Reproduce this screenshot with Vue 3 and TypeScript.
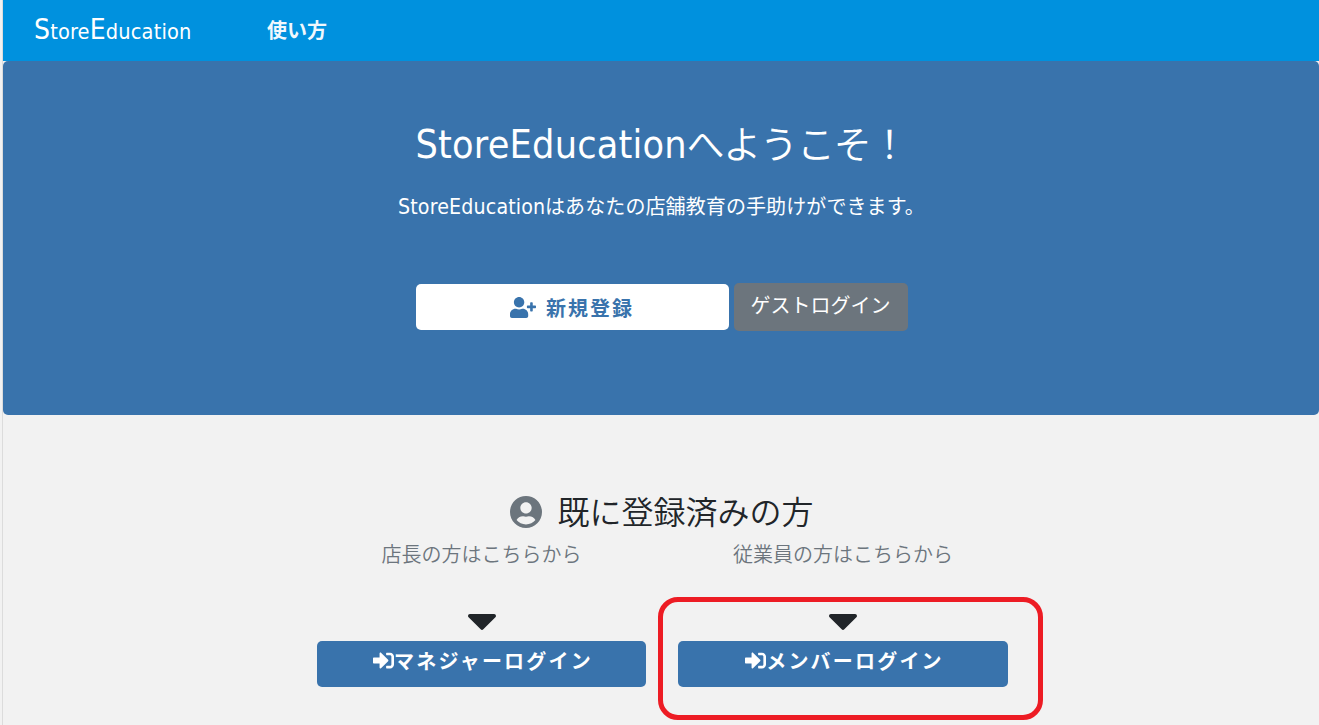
<script setup lang="ts">
interface LoginColumn {
  id: string
  guide: string
  label: string
  highlighted: boolean
}

const brand: string[] = ['S', 'tore', 'E', 'ducation']
const columns: LoginColumn[] = [
  { id: 'manager', guide: '店長の方はこちらから', label: 'マネジャーログイン', highlighted: false },
  { id: 'member', guide: '従業員の方はこちらから', label: 'メンバーログイン', highlighted: true },
]
</script>

<template>
  <div class="page">
    <header class="navbar">
      <a class="brand"><span v-for="(part, i) in brand" :key="i" :class="{ cap: i % 2 === 0 }">{{ part }}</span></a>
      <a class="nav-link">使い方</a>
    </header>

    <section class="hero">
      <h1 class="hero-title"><span class="latin">StoreEducation</span><span class="kana">へようこそ！</span></h1>
      <p class="hero-lead"><span class="latin">StoreEducation</span><span class="kana">はあなたの店舗教育の手助けができます。</span></p>
      <div class="hero-actions">
        <button class="btn btn-signup">
          <svg class="icon-plus" viewBox="0 0 640 512"><path fill="currentColor" d="M624 208h-64v-64c0-8.8-7.2-16-16-16h-32c-8.8 0-16 7.2-16 16v64h-64c-8.8 0-16 7.2-16 16v32c0 8.8 7.2 16 16 16h64v64c0 8.8 7.2 16 16 16h32c8.8 0 16-7.2 16-16v-64h64c8.8 0 16-7.2 16-16v-32c0-8.8-7.2-16-16-16zm-400 48c70.7 0 128-57.3 128-128S294.7 0 224 0 96 57.3 96 128s57.3 128 128 128zm89.6 32h-16.7c-22.2 10.2-46.9 16-72.9 16s-50.6-5.8-72.9-16h-16.7C60.2 288 0 348.2 0 422.4V464c0 26.500 21.500 48 48 48h352c26.500 0 48-21.500 48-48v-41.600c0-74.200-60.200-134.400-134.400-134.400z" /></svg>
          <span>新規登録</span>
        </button>
        <button class="btn btn-guest">ゲストログイン</button>
      </div>
    </section>

    <main class="login">
      <h2 class="login-title">
        <svg class="icon-user" viewBox="0 8 496 496"><path fill="currentColor" d="M248 8C111 8 0 119 0 256s111 248 248 248 248-111 248-248S385 8 248 8zm0 96c48.600 0 88 39.400 88 88s-39.400 88-88 88-88-39.400-88-88 39.400-88 88-88zm0 344c-58.700 0-111.300-26.600-146.500-68.200 18.800-35.400 55.600-59.800 98.500-59.800 2.400 0 4.800.4 7.100 1.100 13 4.200 26.600 6.900 40.900 6.900 14.300 0 28-2.700 40.900-6.900 2.300-.7 4.700-1.100 7.100-1.100 42.900 0 79.700 24.400 98.500 59.800C359.300 421.400 306.700 448 248 448z" /></svg>
        <span>既に登録済みの方</span>
      </h2>
      <div class="columns">
        <div v-for="col in columns" :key="col.id" class="column" :class="col.id">
          <p class="guide">{{ col.guide }}</p>
          <svg class="icon-caret" viewBox="11 192 298 169"><path fill="currentColor" d="M31.300 192h257.300c17.800 0 26.700 21.500 14.100 34.100L174.100 354.700c-7.800 7.800-20.500 7.800-28.300 0L17.200 226.100C4.600 213.500 13.500 192 31.300 192z" /></svg>
          <button class="btn btn-login">
            <svg class="icon-enter" viewBox="0 0 512 512"><path fill="currentColor" d="M416 448h-84c-6.600 0-12-5.400-12-12v-40c0-6.600 5.400-12 12-12h84c17.700 0 32-14.300 32-32V160c0-17.700-14.300-32-32-32h-84c-6.600 0-12-5.400-12-12V76c0-6.600 5.400-12 12-12h84c53 0 96 43 96 96v192c0 53-43 96-96 96zm-47-209L201 71c-15-15-41-4.500-41 17v96H24c-13.300 0-24 10.700-24 24v96c0 13.300 10.700 24 24 24h136v96c0 21.500 26 32 41 17l168-168c9.300-9.400 9.300-24.600 0-34z" /></svg>
            <span>{{ col.label }}</span>
          </button>
          <div v-if="col.highlighted" class="highlight"></div>
        </div>
      </div>
    </main>
  </div>
</template>

<style>
body {
  margin: 0;
  background: #f2f2f2;
  overflow: hidden;
}
</style>

<style scoped>
.page {
  box-sizing: border-box;
  height: 725px;
  margin-left: 2px;
  border-left: 1px solid #dcdcdc;
  background: #f2f2f2;
  font-family: "Noto Sans", "Noto Sans CJK JP", sans-serif;
  color: #212529;
  overflow: hidden;
}
.navbar {
  display: flex;
  align-items: center;
  height: 61px;
  padding-left: 31px;
  background: #0091de;
  color: #fff;
}
.brand,
.latin {
  font-family: "DejaVu Sans Condensed", "DejaVu Sans", sans-serif;
  font-stretch: condensed;
}
.brand {
  width: 233px;
  font-size: 21.6px;
  line-height: 58px;
  letter-spacing: 0.15px;
  white-space: nowrap;
}
.brand .cap {
  font-size: 28px;
}
.nav-link {
  font-size: 20px;
  font-weight: 700;
  line-height: 60px;
  color: #f0f8fd;
}
.hero {
  box-sizing: border-box;
  height: 354px;
  padding-top: 60px;
  border-radius: 5px;
  background: #3973ac;
  color: #fff;
  text-align: center;
}
.hero-title,
.hero-lead {
  display: flex;
  justify-content: center;
  margin: 0;
  padding-left: 1px;
  font-weight: 400;
  white-space: nowrap;
}
.hero-title {
  height: 48px;
  font-size: 39.2px;
  line-height: 47px;
}
.hero-title .latin {
  width: 271px;
  letter-spacing: 0.2px;
  text-align: left;
}
.hero-title .kana {
  width: 221px;
  font-size: 38px;
  font-weight: 350;
  line-height: 45px;
  letter-spacing: -1.2px;
  text-align: left;
}
.hero-lead {
  height: 30px;
  margin-top: 23px;
  font-size: 21.2px;
  line-height: 30px;
}
.hero-lead .latin {
  width: 147px;
  letter-spacing: 0.15px;
  text-align: left;
}
.hero-lead .kana {
  width: 380px;
  font-size: 20px;
  letter-spacing: 0.1px;
  text-align: left;
}
.hero-actions {
  display: flex;
  align-items: center;
  justify-content: center;
  gap: 5px;
  margin-top: 61px;
  padding-left: 1px;
}
.btn {
  display: flex;
  align-items: center;
  justify-content: center;
  box-sizing: border-box;
  margin: 0;
  padding: 0;
  border: 0;
  border-radius: 5px;
  font-family: inherit;
  font-size: 20px;
  white-space: nowrap;
}
.btn-signup {
  width: 313px;
  height: 46px;
  padding-top: 1px;
  gap: 10px;
  background: #fff;
  color: #3973ac;
  font-weight: 700;
  letter-spacing: 2px;
}
.icon-plus {
  width: 26px;
  height: 21px;
}
.btn-guest {
  width: 174px;
  height: 48px;
  padding-bottom: 5px;
  background: #6c757d;
  color: #fff;
}
.login {
  padding-top: 77px;
}
.login-title {
  display: flex;
  align-items: center;
  justify-content: center;
  gap: 15px;
  height: 40px;
  margin: 0;
  padding-left: 2px;
  font-size: 32px;
  font-weight: 350;
  line-height: 40px;
}
.icon-user {
  width: 32px;
  height: 32px;
  color: #6c757d;
}
.columns {
  display: flex;
  gap: 32px;
  padding-left: 314px;
}
.column {
  position: relative;
  display: flex;
  flex-direction: column;
  align-items: center;
  width: 329px;
}
.column.member {
  width: 330px;
}
.guide {
  height: 30px;
  margin: 8px 0 44px;
  font-size: 20px;
  font-weight: 350;
  line-height: 30px;
  color: #6c757d;
}
.icon-caret {
  width: 28px;
  height: 16px;
}
.btn-login {
  width: 100%;
  height: 46px;
  margin-top: 11px;
  padding-bottom: 8px;
  padding-left: 3px;
  gap: 0;
  background: #3973ac;
  color: #fff;
  font-weight: 700;
  letter-spacing: 2.2px;
}
.icon-enter {
  width: 21px;
  height: 21px;
  margin-top: 1px;
}
.highlight {
  position: absolute;
  box-sizing: border-box;
  top: 65px;
  left: -20px;
  width: 385px;
  height: 123px;
  border: 5px solid #ed1c24;
  border-radius: 20px;
}
</style>
